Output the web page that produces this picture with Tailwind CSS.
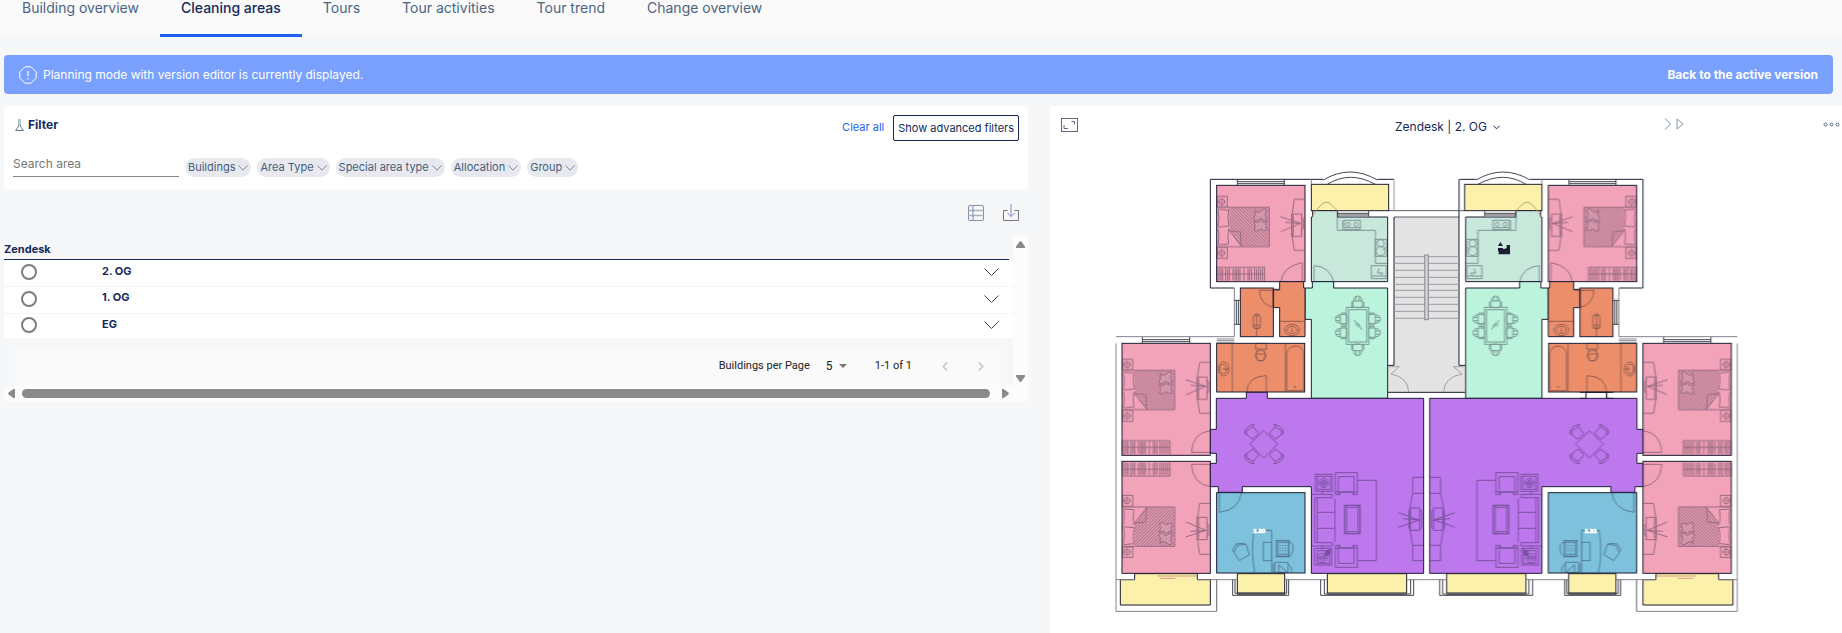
<!DOCTYPE html>
<html lang="en">
<head>
  <meta charset="UTF-8">
  <meta name="viewport" content="width=device-width, initial-scale=1.0">
  <title>Cleaning areas</title>
  <script src="https://cdn.jsdelivr.net/npm/@tailwindcss/browser@4"></script>
</head>
<body class="flex min-h-screen flex-col overflow-hidden bg-[#f5f7f9] font-['Inter',sans-serif] text-[#15295c]">

  <!-- Tabs -->
  <nav class="flex bg-[#fafafa] pl-px text-sm leading-4 text-[#4b6484]">
    <a href="#" class="border-b-3 border-transparent px-[21px] pb-[18px]">Building overview</a>
    <a href="#" class="border-b-3 border-[#1f62ef] px-[21px] pb-[18px] font-medium text-[#15295c]">Cleaning areas</a>
    <a href="#" class="border-b-3 border-transparent px-[21px] pb-[18px]">Tours</a>
    <a href="#" class="border-b-3 border-transparent px-[21px] pb-[18px]">Tour activities</a>
    <a href="#" class="border-b-3 border-transparent px-[21px] pb-[18px]">Tour trend</a>
    <a href="#" class="border-b-3 border-transparent px-[21px] pb-[18px]">Change overview</a>
  </nav>

  <!-- Banner -->
  <div class="mt-[18px] mr-[9px] ml-1 flex h-[39px] items-center rounded-sm bg-[#7aa0fe] pr-[15px] pl-[15px] text-xs text-white">
    <svg class="mr-[6px] size-[18px]" viewBox="0 0 18 18" fill="none" stroke="#fff">
      <path d="M6 .8h6L17.2 6v6L12 17.2H6L.8 12V6z" />
      <path d="M9 5v5M9 12v1.4" stroke-width="1.2" />
    </svg>
    <span>Planning mode with version editor is currently displayed.</span>
    <a href="#" class="ml-auto font-bold">Back to the active version</a>
  </div>

  <div class="mt-3 grid flex-1 grid-cols-[1024fr_792fr] gap-[22px] pl-1">
    <div class="min-w-0">

      <!-- Filter -->
      <section class="h-[83px] rounded-sm bg-white px-[9px] pt-[9px]">
        <div class="flex h-[26px] items-start">
          <svg class="mt-1 mr-1 ml-[2px] h-3 w-[9px]" viewBox="0 0 9 12" fill="none">
            <path d="M3.500 6.500V.5h2v6" stroke="#9fc0c4" />
            <path d="M4.500 1v5.500" stroke="#ecd27c" />
            <path d="M3.500 6v1.500L.6 11.500h7.800L5.500 7.500V6" stroke="#66708a" />
          </svg>
          <h2 class="mt-[2px] text-xs leading-4 font-bold">Filter</h2>
          <button class="mt-1 ml-auto text-[11px] leading-4 text-[#2563eb]">Clear all</button>
          <button class="ml-[9px] h-[26px] rounded-xs border border-[#15295c] px-1 text-[11px]">Show advanced filters</button>
        </div>
        <div class="mt-[10px] flex items-end gap-[6px] text-[11px] text-[#465c7c]">
          <input type="text" aria-label="Search area" placeholder="Search area" class="h-[26px] w-[166px] border-b border-[#85858f] text-xs outline-none placeholder:text-[#777]">
          <button class="flex h-[19px] items-center gap-[3px] rounded-full bg-[#e7e9ef] px-[3px]">Buildings
            <svg class="h-[6px] w-[10px]" viewBox="0 0 10 6" fill="none" stroke="#7b8ba3"><path d="M.5.5L5 5.2 9.500.5" /></svg>
          </button>
          <button class="flex h-[19px] items-center gap-[3px] rounded-full bg-[#e7e9ef] px-[3px]">Area Type
            <svg class="h-[6px] w-[10px]" viewBox="0 0 10 6" fill="none" stroke="#7b8ba3"><path d="M.5.5L5 5.2 9.500.5" /></svg>
          </button>
          <button class="flex h-[19px] items-center gap-[3px] rounded-full bg-[#e7e9ef] px-[3px]">Special area type
            <svg class="h-[6px] w-[10px]" viewBox="0 0 10 6" fill="none" stroke="#7b8ba3"><path d="M.5.5L5 5.2 9.500.5" /></svg>
          </button>
          <button class="flex h-[19px] items-center gap-[3px] rounded-full bg-[#e7e9ef] px-[3px]">Allocation
            <svg class="h-[6px] w-[10px]" viewBox="0 0 10 6" fill="none" stroke="#7b8ba3"><path d="M.5.5L5 5.2 9.500.5" /></svg>
          </button>
          <button class="flex h-[19px] items-center gap-[3px] rounded-full bg-[#e7e9ef] px-[3px]">Group
            <svg class="h-[6px] w-[10px]" viewBox="0 0 10 6" fill="none" stroke="#7b8ba3"><path d="M.5.5L5 5.2 9.500.5" /></svg>
          </button>
        </div>
      </section>

      <!-- Table actions -->
      <div class="flex h-[47px] items-center justify-end gap-[19px] pr-[9px]">
        <button aria-label="Table view">
          <svg class="size-4" viewBox="0 0 16 16" fill="none" stroke="#8790a8">
            <rect x=".5" y=".5" width="15" height="15" rx="1.500" />
            <path d="M.5 5.500h15M.5 10.500h15" stroke="#a9b3b8" stroke-width="1.500" /><path d="M5 .5v15" stroke="#8585cf" />
          </svg>
        </button>
        <button aria-label="Download">
          <svg class="h-[17px] w-4" viewBox="0 0 16 17" fill="none" stroke="#777">
            <path d="M4.500 6.500h-4v10h15v-10h-4" /><path d="M8 0v12.500M4.500 9L8 12.500 11.500 9" stroke="#8585cf" />
          </svg>
        </button>
      </div>

      <!-- Building table -->
      <div class="grid grid-cols-[1fr_15px]">
        <div>
          <table class="w-full border-collapse text-left text-[11px]">
            <thead>
              <tr>
                <th colspan="3" class="p-0"><div class="mr-1 h-6 border-b border-[#15295c] pt-[5px] leading-4">Zendesk</div></th>
              </tr>
            </thead>
            <tbody class="bg-white font-bold">
              <tr class="h-[26px] border-b border-[#f3f4f6]">
                <td class="w-[98px] p-0 pb-[2px] pl-[17px]"><input type="radio" name="floor" aria-label="2. OG" class="block size-4 appearance-none rounded-full border-2 border-[#7d7d7d] checked:bg-[#15295c]"></td>
                <td class="p-0 pb-1">2. OG</td>
                <td class="w-[29px] p-0 pb-[2px]"><button aria-label="Expand 2. OG" class="block"><svg class="h-2 w-[15px]" viewBox="0 0 15 8" fill="none" stroke="#3c4254"><path d="M.5.5l7 7 7-7" /></svg></button></td>
              </tr>
              <tr class="h-[27px] border-b border-[#f3f4f6]">
                <td class="w-[98px] p-0 pb-[2px] pl-[17px]"><input type="radio" name="floor" aria-label="1. OG" class="block size-4 appearance-none rounded-full border-2 border-[#7d7d7d] checked:bg-[#15295c]"></td>
                <td class="p-0 pb-1">1. OG</td>
                <td class="w-[29px] p-0 pb-[2px]"><button aria-label="Expand 1. OG" class="block"><svg class="h-2 w-[15px]" viewBox="0 0 15 8" fill="none" stroke="#3c4254"><path d="M.5.5l7 7 7-7" /></svg></button></td>
              </tr>
              <tr class="h-[25px]">
                <td class="w-[98px] p-0 pb-[2px] pl-[17px]"><input type="radio" name="floor" aria-label="EG" class="block size-4 appearance-none rounded-full border-2 border-[#7d7d7d] checked:bg-[#15295c]"></td>
                <td class="p-0 pb-1">EG</td>
                <td class="w-[29px] p-0 pb-[2px]"><button aria-label="Expand EG" class="block"><svg class="h-2 w-[15px]" viewBox="0 0 15 8" fill="none" stroke="#3c4254"><path d="M.5.5l7 7 7-7" /></svg></button></td>
              </tr>
            </tbody>
          </table>
          <div class="mt-[9px] mr-3 ml-[11px] flex h-[39px] items-center justify-end bg-[#fafafa] pr-[17px] pb-px font-['Roboto',sans-serif] text-[11px] text-[#222]">
            <label for="per-page">Buildings per Page</label>
            <div class="ml-4 flex items-center">
              <select id="per-page" class="w-[13px] appearance-none text-xs leading-5"><option>5</option><option>10</option></select>
              <svg class="h-1 w-2" viewBox="0 0 8 4" fill="#777"><path d="M0 0h8L4 4z" /></svg>
            </div>
            <span class="ml-7">1-1 of 1</span>
            <button aria-label="Previous page" class="ml-[30px]" disabled><svg class="h-[9px] w-[6px]" viewBox="0 0 6 9" fill="none" stroke="#c4c4c4" stroke-width="1.500"><path d="M5.200.5l-4 4 4 4" /></svg></button>
            <button aria-label="Next page" class="ml-[30px]" disabled><svg class="h-[9px] w-[6px]" viewBox="0 0 6 9" fill="none" stroke="#c4c4c4" stroke-width="1.500"><path d="M.8.5l4 4-4 4" /></svg></button>
          </div>
        </div>
        <div class="flex flex-col items-center justify-between bg-[#fcfcfc] pt-[5px] pb-1">
          <svg class="h-[7px] w-[9px]" viewBox="0 0 9 7" fill="#8a8a8a"><path d="M3.600.6Q4.500-.4 5.400.6L9 5.500V7H0V5.500z" /></svg>
          <svg class="h-[7px] w-[9px]" viewBox="0 0 9 7" fill="#8a8a8a"><path d="M3.600 6.400Q4.500 7.400 5.400 6.400L9 1.500V0H0v1.500z" /></svg>
        </div>
        <div class="col-span-2 flex h-[15px] items-center bg-[#fcfcfc] pr-[19px] pl-1">
          <svg class="h-[9px] w-[7px]" viewBox="0 0 7 9" fill="#8a8a8a"><path d="M.6 3.600Q-.4 4.500.6 5.400L5.500 9H7V0H5.500z" /></svg>
          <div class="mr-3 ml-[7px] h-[9px] flex-1 rounded-full bg-[#8a8a8a]"></div>
          <svg class="h-[9px] w-[7px]" viewBox="0 0 7 9" fill="#8a8a8a"><path d="M6.400 3.600Q7.400 4.500 6.400 5.400L1.500 9H0V0h1.500z" /></svg>
        </div>
      </div>
    </div>

    <!-- Floor plan panel -->
    <section class="min-w-0 rounded-tl-sm bg-white">
      <div class="grid h-[54px] grid-cols-[334px_1fr_auto] items-start pt-3 pr-[2px] pl-[11px] text-[#4a5878]">
        <button aria-label="Full screen" class="block w-[17px]">
          <svg class="h-[14px] w-[17px]" viewBox="0 0 17 14" fill="none" stroke="#5d6787">
            <rect x=".5" y=".5" width="16" height="13" /><path d="M10.500 3.500h3v3M3 7v3.500h4" />
          </svg>
        </button>
        <button class="flex items-center gap-[6px] justify-self-start text-xs leading-[18px] text-[#15295c]">Zendesk | 2. OG
          <svg class="h-[5px] w-[7px]" viewBox="0 0 7 5" fill="none" stroke="currentColor"><path d="M.5.8l3 3 3-3" /></svg>
        </button>
        <div class="flex items-center">
          <button aria-label="Play tour" class="mr-[139px]">
            <svg class="h-3 w-5" viewBox="0 0 20 12" fill="none" stroke="#7f95a8"><path d="M1 .5L6.500 6 1 11.500M13 1v10l6-5z" /></svg>
          </button>
          <button aria-label="More">
            <svg class="h-[5px] w-[17px]" viewBox="0 0 17 5" fill="none" stroke="#5d6787"><circle cx="2.500" cy="2.500" r="1.500" /><circle cx="8.500" cy="2.500" r="1.500" /><circle cx="14.500" cy="2.500" r="1.500" /></svg>
          </button>
        </div>
      </div>

      <svg class="ml-[50px] h-[473px] w-[650px]" viewBox="0 0 1950 1419" fill="none" stroke="#1d1d33" stroke-width="3" role="img" aria-label="Floor plan 2. OG">
        <defs>
          <pattern id="hatch" width="7" height="7" patternUnits="userSpaceOnUse" patternTransform="rotate(-45)">
            <path d="M3 0V7" stroke="#1d1d33" stroke-width="3" />
          </pattern>

          <g id="bed">
            <rect x="352" y="109" width="30" height="31" /><circle cx="365" cy="125" r="9" /><path d="M353 125h24M365 113v24" stroke-width="2" />
            <rect x="352" y="262" width="30" height="33" /><circle cx="365" cy="279" r="9" /><path d="M353 279h24M365 267v24" stroke-width="2" />
            <path d="M352 142H508V260H352" />
            <path d="M388 143H507V259H424L388 212z" fill="url(#hatch)" stroke="none" />
            <path d="M388 212l36 47-3-44zM354 150q6 24 0 50M386 148q-5 26 1 50l-33 3M354 206q6 24 0 48M386 206q-5 26 0 46l-32 2M384 150l-30-3" />
            <path d="M464 150q10 12 20 2 10-10 16 0-10 14 2 24-14 8-20-2-12 12-22 4 10-14 4-28zM462 184q12 8 20-4 10 10 20 2-10 14 0 26-12 8-20-2-8 10-20 6 8-16 0-28z" fill="#fff" fill-opacity=".2" />
            <path d="M614 118h-31q-16 77 0 153h31" /><rect x="575" y="162" width="30" height="67" /><path d="M580 166v60M603 172l7 4v30l-7 6M541 170l61 20-60 25M555 187l47 3" />
          </g>

          <g id="wardrobe" stroke-width="3">
            <path d="M351 322H494V364M351 342H494M351 322V364" />
            <path d="M357 325v38M363 324v38M368 326v36M377 322v41M383 326v36M388 324v38M399 326v34M405 323v40M410 326v36M415 324v38M420 326v36M432 324v38M444 325v36M449 324v38M455 326v36M464 323v40M470 326v36M476 324v38M482 326v36M488 324v38" />
          </g>

          <g id="chair">
            <path d="M-14-9h28V9q-14 5-28 0zM-16-6h-2V8h4M16-6h2V8h-4M-12-9Q-13-23 0-24 13-23 12-9M-5-23V-9M5-23V-9" />
          </g>

          <g id="armchair">
            <rect x="0" y="0" width="66" height="58" /><path d="M9 64V12H56V64M0 58V66H14V58M52 58V66H66V58M14 58H52" />
          </g>

          <g id="flat">
            <!-- rooms -->
            <rect x="350" y="76" width="265" height="289" fill="#f2a3b9" />
            <rect x="66" y="550" width="265" height="336" fill="#f2a3b9" />
            <rect x="66" y="904" width="265" height="336" fill="#f2a3b9" />
            <rect x="634" y="73" width="232" height="79" fill="#fcf1aa" />
            <path d="M638 152H712V171H863V365H634V171H638z" fill="#c8e8dc" />
            <path d="M637 365H701V384H863V715H634V478H615V384H637z" fill="#bbf3dc" />
            <rect x="421" y="384" width="99" height="146" fill="#ec8e6a" />
            <path d="M539 365H611V384H615V530H539V443H520V388H539z" fill="#ec8e6a" />
            <rect x="350" y="550" width="264" height="146" fill="#ec8e6a" />
            <path d="M439 697H502V715H971V1240H634V980H427V997H355V980H331V910H349V880H331V808H349V715H439z" fill="#bd78ee" />
            <rect x="350" y="998" width="265" height="241" fill="#7dc1dc" />
            <path d="M104 1241H292V1259H331V1335H61V1259H104z" fill="#fcf1aa" />
            <rect x="412" y="1241" width="142" height="58" fill="#fcf1aa" />
            <rect x="682" y="1241" width="238" height="58" fill="#fcf1aa" />

            <!-- outer walls and windows -->
            <g stroke="#44444f">
              <path d="M403 384H331V58H670M832 58H882" stroke="#1d1d33" /><path d="M882 58V152" stroke="#9a9aa4" />
              <path d="M403 384V530H48M48 550V1354H350V1259M48 1259H104M292 1259H412M554 1259H682M920 1259H980" stroke="#83838d" />
              <path d="M350 1259V1354M634 58V73" stroke="#83838d" />
              <path d="M670 60Q750 12 832 60M680 74Q750 30 828 74" />
              <path d="M412 58V76M553 58V76M412 65H553M412 71H553M127 531V549M269 531V549M127 539H269M127 545H269" />
              <path d="M350 537H403M350 542H403M350 547H403" stroke="#8a8a92" />
              <path d="M403 421H420M403 493H420M409 421V493M415 421V493M713 152V170M806 152V170M713 160H806M713 165H806" />
              <path d="M405 1259V1300H560V1259M411 1303H556M398 1259V1306H566V1259" />
              <path d="M673 1259V1302H932V1259M682 1303H920M662 1259V1306H941V1259" />
            </g>
            <path d="M172 1248H292M180 1255H226" stroke="#d49a8b" />
            <path d="M638 170Q645 152 660 138 678 116 696 136L712 152" stroke="#c9a06a" />

            <!-- furniture -->
            <g opacity=".42">
              <use href="#bed" /><use href="#wardrobe" />
              <use href="#bed" x="-284" y="489" /><use href="#wardrobe" x="-284" y="520" />
              <g transform="matrix(1 0 0 -1 0 1790)"><use href="#bed" x="-284" y="489" /><use href="#wardrobe" x="-284" y="520" /></g>
              <path d="M607 364V308Q550 318 543 364M331 877H274Q278 818 331 812M331 913H274Q278 972 331 980" />
              <path d="M642 364V317Q690 320 701 365M358 998V1057Q418 1050 424 998" />

              <!-- kitchen -->
              <path d="M712 171V211H826V310H863M728 180V211" />
              <rect x="733" y="181" width="48" height="28" /><circle cx="745" cy="193" r="6" /><circle cx="768" cy="193" r="6" /><path d="M735 203H780" />
              <rect x="826" y="238" width="34" height="51" /><circle cx="842" cy="250" r="11" /><circle cx="842" cy="273" r="14" /><path d="M848 270l12-10" />
              <rect x="814" y="317" width="45" height="39" /><path d="M814 348H858M838 325l-6 14h16l-6 8" />

              <!-- dining table -->
              <rect x="739" y="442" width="67" height="111" /><rect x="746" y="449" width="54" height="97" /><path d="M762 480l24 30M764 492l9 8M772 488l10 12" />
              <use href="#chair" transform="translate(773 432)" /><use href="#chair" transform="translate(773 563) rotate(180)" />
              <use href="#chair" transform="translate(730 477) rotate(-90)" /><use href="#chair" transform="translate(730 518) rotate(-90)" />
              <use href="#chair" transform="translate(817 477) rotate(90)" /><use href="#chair" transform="translate(817 518) rotate(90)" />

              <!-- bathrooms -->
              <path d="M478 391H520V442Q480 434 478 391M520 391H539M470 463V530M539 484H614" />
              <rect x="460" y="467" width="21" height="38" rx="3" /><circle cx="470" cy="500" r="7" /><path d="M462 467q8-12 18 0" />
              <ellipse cx="576" cy="510" rx="22" ry="17" /><ellipse cx="576" cy="510" rx="14" ry="11" /><path d="M576 505v12" />
              <path d="M397 550V695M556 550V695M440 695Q444 648 499 647V695" />
              <ellipse cx="371" cy="627" rx="16" ry="21" /><ellipse cx="369" cy="627" rx="10" ry="14" /><path d="M369 627h16" />
              <rect x="467" y="550" width="32" height="17" /><circle cx="482" cy="587" r="16" /><path d="M471 570Q466 588 474 602H490Q498 588 493 570M473 582H491" />
              <path d="M560 692V585Q560 560 586 558 611 560 611 585V692z" /><circle cx="585" cy="681" r="2" />

              <!-- living room -->
              <path d="M491 812L533 852 491 894 450 852z" />
              <g id="seat"><path d="M440 812L459 800 476 820 458 838 440 824zM433 820Q436 798 462 793L459 801M433 820L440 824" /></g>
              <use href="#seat" transform="matrix(-1 0 0 1 984 0)" /><use href="#seat" transform="matrix(1 0 0 -1 0 1705)" /><use href="#seat" transform="matrix(-1 0 0 -1 984 1705)" />
              <path d="M772 961H829V1202H772M938 952H970M938 952V1000Q918 1070 938 1156V1202H970M938 1000H970M938 1156H970" />
              <rect x="931" y="1044" width="28" height="67" /><path d="M927 1050V1106M959 1050l6 3v50l-6 4M895 1058l63 22-64 22M910 1076l48 4" />
              <rect x="646" y="943" width="51" height="51" /><rect x="652" y="949" width="39" height="39" /><circle cx="671" cy="969" r="14" /><circle cx="671" cy="969" r="8" /><path d="M671 958v22M660 969h22" />
              <rect x="644" y="1165" width="51" height="50" /><rect x="652" y="1172" width="37" height="38" /><circle cx="667" cy="1194" r="14" /><circle cx="667" cy="1194" r="7" /><path d="M667 1194l16-18M655 1194h24" /><path d="M676 1174l16-6-4 16-12 4z" fill="#1d1d33" />
              <use href="#armchair" x="706" y="938" /><use href="#armchair" transform="matrix(1 0 0 -1 706 1222)" />
              <path d="M634 1003H697V1013H644V1148H697V1158H634M652 1013V1148M652 1057H705M652 1105H705M705 1015V1146M667 994v9M667 1158v7" />
              <rect x="734" y="1036" width="46" height="85" stroke-width="4" /><rect x="740" y="1042" width="34" height="73" /><path d="M734 1036l6 6M780 1036l-6 6M734 1121l6-6M780 1121l-6-6" />

              <!-- office -->
              <path d="M515 1237V1111H462Q452 1175 464 1237" /><rect x="490" y="1147" width="25" height="55" />
              <path d="M402 1178L412 1156 438 1153 448 1184 418 1202zM402 1178L397 1170 408 1152 428 1150 438 1153" />
              <rect x="529" y="1142" width="38" height="48" /><rect x="533" y="1147" width="32" height="38" /><path d="M567 1147q15 2 12 20 0 18-12 20M526 1142h44M526 1190h44" /><path d="M541 1155v26M549 1155v26M557 1155v26" stroke-dasharray="3 5" stroke-width="4" />
              <path d="M524 1207H564V1237H524zM536 1214L562 1237M536 1214v23M564 1214q14 4 10 23M520 1210v27" />
            </g>
          </g>
        </defs>

        <!-- stairwell -->
        <path d="M882 171H1077V616H1096V697H863V616H882z" fill="#e3e3e3" stroke="none" />
        <path d="M866 152H1094M882 171H1077" stroke="#5b5b68" />
        <path d="M882 171V616H863M1077 58V616H1096M863 697H1096" />
        <path d="M882 290H1077M882 310H1077M882 331H1077M882 352H1077M882 373H1077M882 391H1077M882 412H1077M882 433H1077M882 454H1077M882 475H1077" stroke="#9b9ba3" />
        <rect x="974" y="285" width="11" height="194" fill="#cfcfd2" stroke="#8d8d95" />
        <path d="M867 620H898L873 642Q925 652 926 696M1091 620H1060L1086 642Q1032 652 1031 696" stroke="#a0a0a8" />

        <use href="#flat" />
        <use href="#flat" transform="matrix(-1 0 0 1 1960 0)" />
        <path d="M1456 699H1522V714H1456z" fill="#fff" stroke="none" />
        <path d="M1440 697H1540M1440 715H1540M1458 697V715M1519 697V715" />

        <!-- robot marker -->
        <path d="M1194 258L1201 246 1209 258zM1194 264H1208L1211 268 1220 264V255H1230V283H1196V274H1194z" fill="#1d1d33" stroke="none" />

        <g fill="#fff" stroke="#fff" stroke-width="2" font-family="Roboto, sans-serif" font-size="18" font-weight="700" text-anchor="middle">
          <text x="478" y="1120">2.30</text>
          <text x="1472" y="1120">2.32</text>
        </g>
      </svg>
    </section>
  </div>
</body>
</html>
